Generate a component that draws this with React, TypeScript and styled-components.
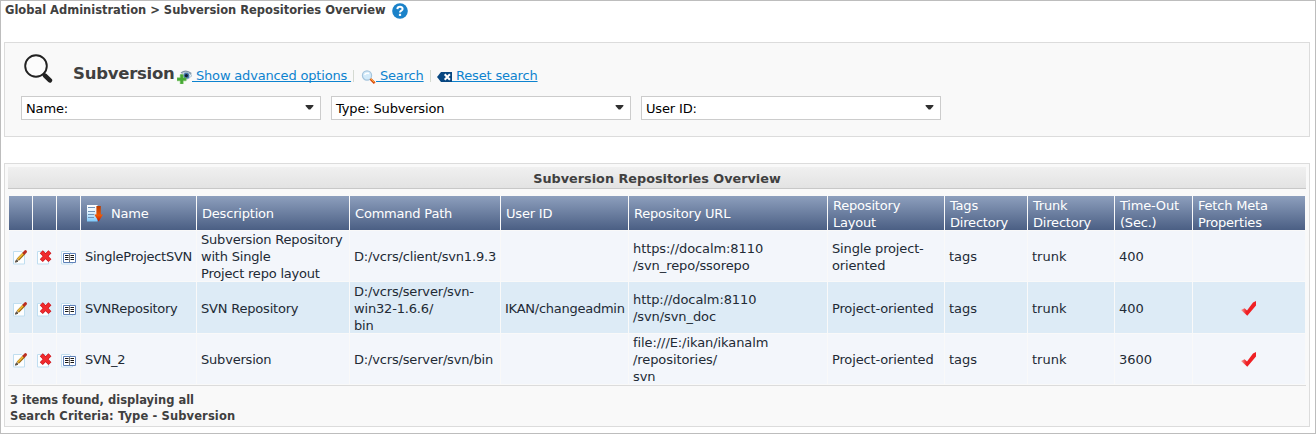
import React from 'react';
import styled, { createGlobalStyle } from 'styled-components';

const GlobalStyle = createGlobalStyle`
  * { box-sizing: border-box; }
  body {
    margin: 0;
    background: #fff;
    font-family: Verdana, "DejaVu Sans", sans-serif;
    font-size: 13px;
    color: #222a35;
  }
`;

const Page = styled.div`
  width: 1316px;
  height: 434px;
  border: 1px solid #bdbdbd;
  padding: 0 5px 0 3px;
  overflow: hidden;
`;

const Breadcrumb = styled.div`
  height: 41px;
  padding-left: 1px;
  display: flex;
  align-items: flex-start;
  gap: 6px;
  font-weight: bold;
  font-size: 11.5px;
  letter-spacing: -0.02px;
  line-height: 19px;
  color: #404040;
  white-space: nowrap;
`;

const Panel = styled.section`
  background: #f9f9f9;
  border: 1px solid #dcdcdc;
`;

const SearchPanel = styled(Panel)`
  height: 95px;
  padding: 9px 16px 0;
`;

const SearchHeader = styled.div`
  display: flex;
  height: 44px;
  white-space: nowrap;
`;

const Heading = styled.h1`
  margin: 10px 0 0 20px;
  width: 104px;
  font-size: 16.5px;
  letter-spacing: -0.25px;
  line-height: 24px;
  color: #404040;
`;

const Actions = styled.div`
  display: flex;
  padding-top: 14px;
  line-height: 19px;
  letter-spacing: -0.17px;
`;

const Action = styled.a<{ $width: number; $indent?: number }>`
  display: flex;
  align-items: flex-start;
  width: ${(p) => p.$width}px;
  padding-left: ${(p) => p.$indent ?? 0}px;
  color: #0d83cf;
  svg { flex: none; }
`;

const ActionLabel = styled.span`
  white-space: pre;
  text-decoration: underline;
  text-decoration-thickness: 1px;
  text-decoration-skip-ink: none;
  text-underline-offset: 1px;
`;

const Divider = styled.i`
  width: 1px;
  height: 12px;
  margin-top: 4px;
  background: #d5dad2;
`;

const Filters = styled.div`
  display: flex;
  gap: 10px;
`;

const Filter = styled.div`
  display: flex;
  justify-content: space-between;
  align-items: center;
  width: 300px;
  height: 24px;
  padding: 0 6px 0 4px;
  background: #fff;
  border: 1px solid #ccc;
  letter-spacing: -0.15px;
  color: #000;
  svg { margin-bottom: 2px; }
`;

const ResultsPanel = styled(Panel)`
  height: 264px;
  margin-top: 26px;
  padding: 3px;
`;

const ResultsTitle = styled.h2`
  margin: 0 0 6px;
  height: 22px;
  background: linear-gradient(#f0f0f0, #e3e3e3);
  border-bottom: 1px solid #c8c8c8;
  font-size: 12.8px;
  line-height: 23px;
  text-align: center;
  color: #404040;
`;

const Table = styled.table`
  width: 1298px;
  table-layout: fixed;
  border-collapse: separate;
  border-spacing: 1px;
  line-height: 17px;
`;

const HeadCell = styled.th`
  height: 34px;
  padding: 0 0 0 5px;
  background: linear-gradient(#8d9fbd, #4b5f84);
  color: #fff;
  font-weight: normal;
  text-align: left;
`;

const CellText = styled.div<{ $spacing?: number }>`
  margin-bottom: -1.5px;
  white-space: pre;
  letter-spacing: ${(p) => p.$spacing ?? -0.2}px;
`;

const SortLabel = styled.div`
  display: flex;
  align-items: center;
  gap: 8px;
`;

const Row = styled.tr<{ $shaded?: boolean; $height: number }>`
  height: ${(p) => p.$height}px;
  background: ${(p) => (p.$shaded ? '#ddebf6' : '#f3f6fb')};
`;

const Cell = styled.td`
  padding: 0 0 0 4px;
`;

const IconCell = styled(Cell)`
  svg { display: block; margin: 2px 0 -2px; }
`;

const CheckCell = styled(Cell)`
  padding: 0 1px 0 0;
  svg { display: block; margin: 1px auto 0; }
`;

const Summary = styled.div`
  border-top: 1px solid #dcdcdc;
  padding: 6px 0 0 2px;
  font-size: 11.5px;
  font-weight: bold;
  line-height: 16px;
  color: #404040;
`;

const Criteria = styled.div`
  letter-spacing: 0.12px;
`;

const HelpIcon = () => (
  <svg width="16" height="19" viewBox="0 0 16 19">
    <circle cx="8" cy="10" r="7.8" fill="#1b82c9" />
    <path d="M5.4 8.1C5.5 5 10.7 5.1 10.6 8C10.5 9.8 8 9.6 8 11.6" fill="none" stroke="#fff" strokeWidth="2" />
    <rect x="6.9" y="12.8" width="2.2" height="2.1" fill="#fff" />
  </svg>
);

const MagnifierIcon = () => (
  <svg width="32" height="33" viewBox="-.5 -1 32 33">
    <circle cx="14.5" cy="13" r="10.8" fill="#fcfcfc" stroke="#222" strokeWidth="1.9" />
    <path d="M21.5 20.5l2 2" stroke="#222" strokeWidth="2.5" />
    <path d="M23.5 22.6l4.9 4.7" stroke="#222" strokeWidth="4.6" strokeLinecap="round" />
  </svg>
);

const AdvancedIcon = () => (
  <svg width="15" height="18" viewBox="0 0 15 18">
    <path d="M3.5 9.5Q9 3 15 9.5Q11 14.5 6 12.5" fill="#e7f1f8" stroke="#9fb7c9" />
    <path d="M4 7Q9 3 14.3 7.6" fill="none" stroke="#8095a6" strokeWidth="1.4" />
    <circle cx="9.4" cy="9.8" r="3" fill="#4373a8" />
    <circle cx="9.4" cy="9.6" r="1.6" fill="#111f35" />
    <path d="M3.2 8.5h3v3.3h3v3h-3V18h-3v-3.2H0v-3h3.2z" fill="#46a934" stroke="#74c160" strokeWidth=".5" />
  </svg>
);

const SearchIcon = () => (
  <svg width="15" height="18" viewBox="0 0 15 18">
    <circle cx="6" cy="9.5" r="4.6" fill="#d3ebfa" stroke="#a5c5dd" strokeWidth="1.2" />
    <path d="M3.6 9Q5 6.5 8 7.5" stroke="#fff" strokeWidth="1.5" fill="none" />
    <path d="M9.5 13l4.2 4.2" stroke="#d9450c" strokeWidth="2.4" />
    <path d="M9.7 12.6l3.7 3.7" stroke="#ffbd3c" strokeWidth="1" />
  </svg>
);

const ResetIcon = () => (
  <svg width="15" height="18" viewBox="0 0 15 18">
    <path d="M0 11l4-5h11v10H4z" fill="#084781" />
    <path d="M7.7 8.2l5.2 5.6M12.9 8.2l-5.2 5.6" stroke="#fff" strokeWidth="2" />
  </svg>
);

const CaretIcon = () => (
  <svg width="9" height="5" viewBox="0 0 9 5">
    <path d="M.6 0h7.8v1L5.3 4.6H3.7L.6 1z" fill="#303030" />
  </svg>
);

const SortIcon = () => (
  <svg width="17" height="18" viewBox="0 0 17 18">
    <defs>
      <linearGradient id="sheet" x2="0" y2="1">
        <stop stopColor="#fff" />
        <stop offset=".4" stopColor="#e6f4fe" />
        <stop offset="1" stopColor="#7cc8fa" />
      </linearGradient>
      <linearGradient id="arrow" x2="0" y2="1">
        <stop stopColor="#b63a00" />
        <stop offset=".6" stopColor="#ef5a05" />
        <stop offset="1" stopColor="#c01804" />
      </linearGradient>
    </defs>
    <path d="M1 1h10.5v16.5H1z" fill="url(#sheet)" />
    <path d="M2 3.5h7M2 7.5h7M2 10.5h6M2 13.5h6" stroke="#7193b8" />
    <path d="M10.4 2h4.4v8.5H17l-4.3 7-4.4-7h2.1z" fill="url(#arrow)" />
  </svg>
);

const Sheet = () => (
  <path d="M.5 1.5h8l3 3v9.5H.5z" fill="#fdfeff" stroke="#c0def0" />
);

const EditIcon = () => (
  <svg width="15" height="16" viewBox="0 0 15 16">
    <Sheet />
    <path d="M4.8 9.8l6.3-6.6" stroke="#9a6810" strokeWidth="3.1" />
    <path d="M4.8 9.2l6.1-6.4" stroke="#f3bd35" strokeWidth="1.6" />
    <path d="M11.2 3l1.2-1.3" stroke="#b92d20" strokeWidth="3" strokeLinecap="round" />
    <path d="M2.4 12.2l1-2.4 1.6 1.5z" fill="#5c5145" stroke="#5c5145" />
  </svg>
);

const DeleteIcon = () => (
  <svg width="15" height="16" viewBox="0 0 15 16">
    <Sheet />
    <path d="M4.3 1.8l8.6 8.8M12.9 1.8l-8.6 8.8" stroke="#c8141b" strokeWidth="4.2" />
    <path d="M4.6 2.1l8 8.2M12.6 2.1l-8 8.2" stroke="#f02a2d" strokeWidth="3" />
  </svg>
);

const DetailsIcon = () => (
  <svg width="16" height="16" viewBox="0 0 16 16">
    <path d="M.5 1.5h8l3 3v9.5H.5z" fill="#fdfeff" stroke="#c0def0" />
    <path d="M2.5 3.5h12v9h-12z" fill="#fff" stroke="#5d80b8" />
    <path d="M8.5 4v8" stroke="#777" />
    <path d="M4 5.5h3.5M4 7.5h3.5M4 9.5h3.5M9.5 5.5H13M9.5 7.5H13M9.5 9.5H13" stroke="#181818" />
  </svg>
);

const CheckIcon = () => (
  <svg width="15" height="15" viewBox="0 0 15 15">
    <defs>
      <linearGradient id="tick">
        <stop stopColor="#f7a9a5" />
        <stop offset=".35" stopColor="#ef2024" />
      </linearGradient>
    </defs>
    <path d="M0 9l3.6-1.8L6 9.6 12 1.4 15 0v4.6L6.3 14.8z" fill="url(#tick)" />
  </svg>
);

const columnWidths = [23, 23, 23, 115, 152, 150, 127, 198, 116, 82, 86, 77, 112];

const headings = [
  'Description',
  'Command Path',
  'User ID',
  'Repository URL',
  'Repository\nLayout',
  'Tags\nDirectory',
  'Trunk\nDirectory',
  'Time-Out\n(Sec.)',
  'Fetch Meta\nProperties',
];

// Letter spacing for each text column of the body, name to time-out.
const columnSpacing = [-0.27, -0.2, -0.17, -0.25, -0.08, -0.15, 0, 0, 0];

const repositories = [
  {
    height: 50,
    fetchMeta: false,
    values: [
      'SingleProjectSVN',
      'Subversion Repository\nwith Single\nProject repo layout',
      'D:/vcrs/client/svn1.9.3',
      '',
      'https://docalm:8110\n/svn_repo/ssorepo',
      'Single project-\noriented',
      'tags',
      'trunk',
      '400',
    ],
  },
  {
    height: 51,
    fetchMeta: true,
    values: [
      'SVNRepository',
      'SVN Repository',
      'D:/vcrs/server/svn-\nwin32-1.6.6/\nbin',
      'IKAN/changeadmin',
      'http://docalm:8110\n/svn/svn_doc',
      'Project-oriented',
      'tags',
      'trunk',
      '400',
    ],
  },
  {
    height: 50,
    fetchMeta: true,
    values: [
      'SVN_2',
      'Subversion',
      'D:/vcrs/server/svn/bin',
      '',
      'file:///E:/ikan/ikanalm\n/repositories/\nsvn',
      'Project-oriented',
      'tags',
      'trunk',
      '3600',
    ],
  },
];

export default function App() {
  return (
    <>
      <GlobalStyle />
      <Page>
        <Breadcrumb>
          <span>Global Administration &gt; Subversion Repositories Overview</span>
          <HelpIcon />
        </Breadcrumb>
        <SearchPanel>
          <SearchHeader>
            <MagnifierIcon />
            <Heading>Subversion</Heading>
            <Actions>
              <Action $width={176}>
                <AdvancedIcon />
                <ActionLabel> Show advanced options </ActionLabel>
              </Action>
              <Divider />
              <Action $width={76} $indent={7}>
                <SearchIcon />
                <ActionLabel> Search</ActionLabel>
              </Action>
              <Divider />
              <Action $width={120} $indent={6}>
                <ResetIcon />
                <ActionLabel> Reset search</ActionLabel>
              </Action>
            </Actions>
          </SearchHeader>
          <Filters>
            {['Name:', 'Type: Subversion', 'User ID:'].map((label) => (
              <Filter key={label}>
                {label}
                <CaretIcon />
              </Filter>
            ))}
          </Filters>
        </SearchPanel>
        <ResultsPanel>
          <ResultsTitle>Subversion Repositories Overview</ResultsTitle>
          <Table>
            <colgroup>
              {columnWidths.map((width, i) => (
                <col key={i} width={width} />
              ))}
            </colgroup>
            <thead>
              <tr>
                <HeadCell />
                <HeadCell />
                <HeadCell />
                <HeadCell>
                  <SortLabel>
                    <SortIcon />
                    <CellText>Name</CellText>
                  </SortLabel>
                </HeadCell>
                {headings.map((heading) => (
                  <HeadCell key={heading}>
                    <CellText>{heading}</CellText>
                  </HeadCell>
                ))}
              </tr>
            </thead>
            <tbody>
              {repositories.map((repo, i) => (
                <Row key={repo.values[0]} $height={repo.height} $shaded={i % 2 === 1}>
                  <IconCell><EditIcon /></IconCell>
                  <IconCell><DeleteIcon /></IconCell>
                  <IconCell><DetailsIcon /></IconCell>
                  {repo.values.map((value, column) => (
                    <Cell key={column}>
                      <CellText $spacing={columnSpacing[column]}>{value}</CellText>
                    </Cell>
                  ))}
                  <CheckCell>{repo.fetchMeta && <CheckIcon />}</CheckCell>
                </Row>
              ))}
            </tbody>
          </Table>
          <Summary>
            <div>3 items found, displaying all</div>
            <Criteria>Search Criteria: Type - Subversion</Criteria>
          </Summary>
        </ResultsPanel>
      </Page>
    </>
  );
}
